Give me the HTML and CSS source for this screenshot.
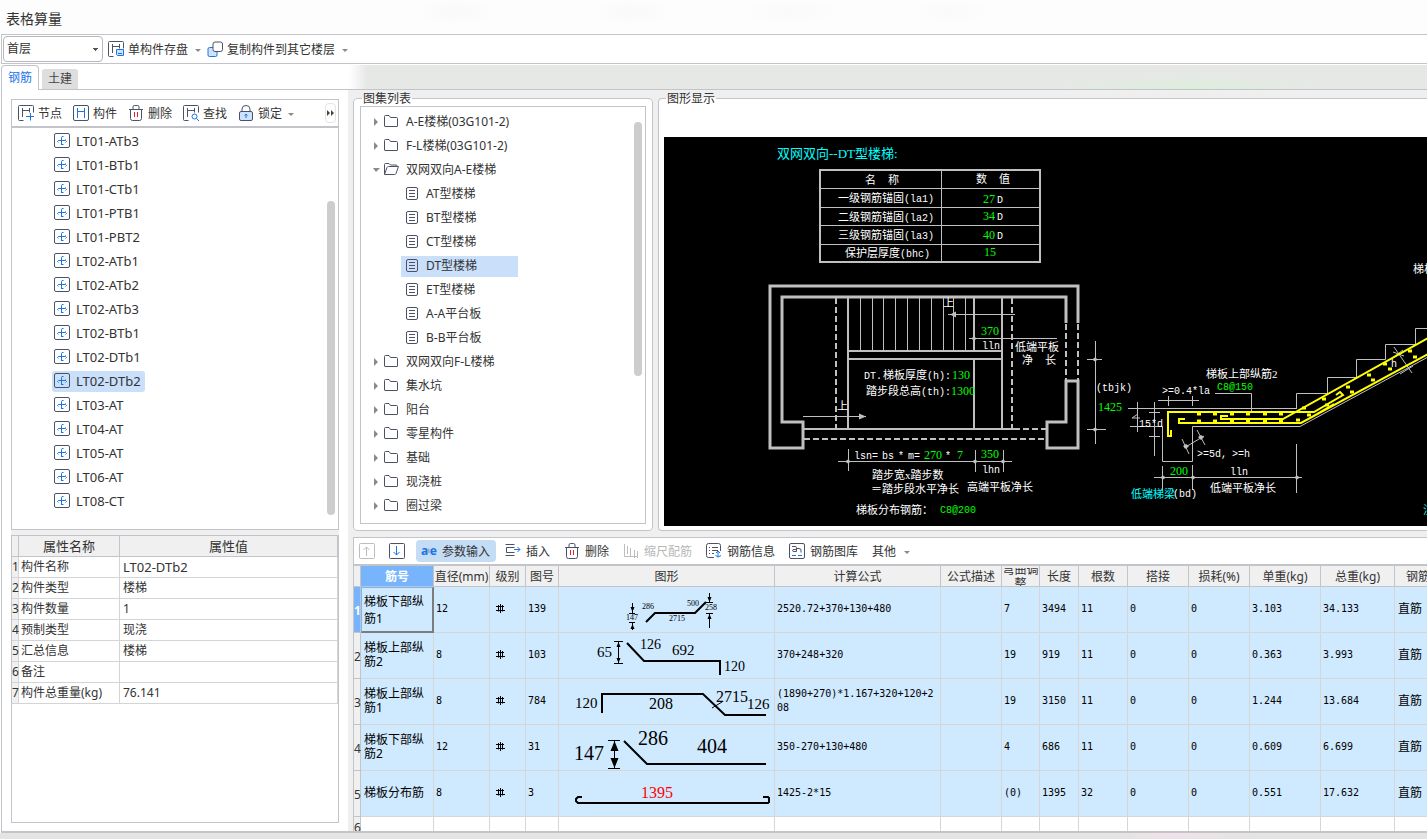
FILE: index.html
```html
<!DOCTYPE html>
<html lang="zh-CN">
<head>
<meta charset="utf-8">
<title>表格算量</title>
<link rel="stylesheet" href="styles.css">
</head>
<body>
<svg class="defs" width="0" height="0" aria-hidden="true">
  <symbol id="i-frame" viewBox="0 0 16 16"><path d="M5.500 15.500h-4a1 1 0 0 1-1-1v-13a1 1 0 0 1 1-1h13a1 1 0 0 1 1 1v6M4.500 3v9M4.500 5.500h7M11.500 3v4.500" class="ln"/></symbol>
  <symbol id="i-save" viewBox="0 0 16 16"><use href="#i-frame"/><path d="M8.500 8.500h7v6h-6l-1-1z" class="bl fillb"/><path d="M10 12.500h4" class="bl"/></symbol>
  <symbol id="i-node" viewBox="0 0 16 16"><use href="#i-frame"/><path d="M8 11.500h8M12.500 8v7.500" class="bl"/></symbol>
  <symbol id="i-comp" viewBox="0 0 16 16"><rect x=".5" y=".5" width="15" height="15" rx="1.500" class="ln"/><path d="M4.500 3v10M11.500 3v10M4.500 6.500h7" class="bl"/></symbol>
  <symbol id="i-find" viewBox="0 0 16 16"><use href="#i-frame"/><circle cx="11.500" cy="11.500" r="2.500" class="bl"/><path d="M13.500 13.500l2.500 2.500" class="bl"/></symbol>
  <symbol id="i-del" viewBox="0 0 16 16"><path d="M1 4.500h14M5 4V2q0-1.500 1.500-1.500h3Q11 .5 11 2v2M2.500 5v8.500q0 2 2 2h7q2 0 2-2V5" class="ln"/><path d="M6.500 7v5M9.500 7v5" class="rd"/></symbol>
  <symbol id="i-lock" viewBox="0 0 16 16"><path d="M4 6V4q0-3.500 4-3.500T12 4v2" class="ln"/><rect x="1.500" y="6.500" width="13" height="9" rx="1.500" class="ln fillb"/><path d="M8 13v-4M6.500 10.500L8 9l1.500 1.500" class="bl"/></symbol>
  <symbol id="i-copy" viewBox="0 0 16 16"><rect x="1" y="6.500" width="9" height="9" rx="1.500" class="bl fillb"/><rect x="6" y="1" width="9.500" height="9.500" rx="2" class="ln fillw"/></symbol>
  <symbol id="i-rebar" viewBox="0 0 16 16"><rect x=".5" y=".5" width="15" height="14" rx="1.500" class="ln"/><path d="M4.500 9.500L3.500 8.500 4.500 7.500h7l1 1-1 1M11.500 7.500v-1M7.500 12V4.500q0-1.500 2-1M7.500 11.500h2" class="bl"/></symbol>
  <symbol id="i-folder" viewBox="0 0 16 16"><path d="M1.500 12V2.500q0-1 1-1h3.500l1.500 2h6q1 0 1 1V12q0 .5-.5.5H2q-.5 0-.5-.5z" class="ln"/></symbol>
  <symbol id="i-open" viewBox="0 0 16 16"><path d="M1.500 12V2.500q0-1 1-1h3.500l1.500 1.500h5.500q1 0 1 1V4.500M1.500 12.500l2.500-7q.5-1 1.500-1h10l-2.500 7q-.3 1-1.500 1z" class="ln"/></symbol>
  <symbol id="i-doc" viewBox="0 0 16 16"><rect x="2.500" y="1.500" width="11" height="12" rx="1.500" class="ln"/><path d="M5 4.500h6M5 7.500h6M5 10.500h6" class="ln"/></symbol>
  <symbol id="i-up" viewBox="0 0 16 16"><rect x=".5" y=".5" width="15" height="15" rx="1" class="gr"/><path d="M7.500 13V4M4.500 7l3-3 3 3" class="gr"/></symbol>
  <symbol id="i-down" viewBox="0 0 16 16"><rect x=".5" y=".5" width="15" height="15" rx="1" class="ln"/><path d="M7.500 3v9M4.500 9l3 3 3-3" class="bl"/></symbol>
  <symbol id="i-insert" viewBox="0 0 16 16"><path d="M.5 1.500h9M.5 12.500h9M9.500 4.500h-8v5h8" class="ln"/><path d="M9 6.500h6M12.500 4l2.500 2.500L12.500 9" class="bl"/></symbol>
  <symbol id="i-scale" viewBox="0 0 16 16"><path d="M1.500 1v12.500h13M4.500 3v8M7.500 5v8M11.500 7v8M14.500 8v7" class="gr"/></symbol>
  <symbol id="i-info" viewBox="0 0 16 16"><path d="M8 14.500H2.500q-2 0-2-2v-10q0-2 2-2h10q2 0 2 2V8M3 4.500h1M6 4.500h6M3 7.500h1M6 7.500h6M3 10.500h1M6 10.500h2" class="ln"/><path d="M12 8.500v5.500M9.500 12.500q2.500 3 5.500 0M10 10l2-2 2 2" class="bl"/></symbol>
  <symbol id="i-lib" viewBox="0 0 16 16"><rect x=".5" y=".5" width="15" height="15" rx="1.500" class="ln"/><path d="M3 3.500h3q1.500 0 1.500 1v4M7.500 6.500H5q-1.500 0-1.500 1t1.500 1h2.500M8 5.500h2q2 0 2 1.500v2.500" class="ln"/><path d="M3 12.500h4M9 12.500h4" class="bl"/></symbol>
  <symbol id="i-grade" viewBox="0 0 10 12"><path d="M5.500 2v9M3.500 3v6.500M7.500 3v6.500M1 4.500h8M1 8.500h9" class="blk"/></symbol>
</svg>

<header class="title"><h1>表格算量</h1></header>

<div class="bar top-bar">
  <select class="floor" aria-label="楼层"><option>首层</option></select>
  <button class="tb"><svg class="ic"><use href="#i-save"/></svg>单构件存盘<i class="caret"></i></button>
  <button class="tb"><svg class="ic"><use href="#i-copy"/></svg>复制构件到其它楼层<i class="caret"></i></button>
</div>

<nav class="tabs">
  <button class="tab on">钢筋</button><button class="tab">土建</button><span class="strip"></span>
</nav>

<main class="main">
  <aside class="side">
    <section class="box tree-box">
      <div class="bar side-bar">
        <button class="tb"><svg class="ic"><use href="#i-node"/></svg>节点</button>
        <button class="tb"><svg class="ic"><use href="#i-comp"/></svg>构件</button>
        <button class="tb"><svg class="ic"><use href="#i-del"/></svg>删除</button>
        <button class="tb"><svg class="ic"><use href="#i-find"/></svg>查找</button>
        <button class="tb"><svg class="ic"><use href="#i-lock"/></svg>锁定<i class="caret"></i></button>
        <button class="more" aria-label="更多"><i></i><i></i></button>
      </div>
      <ul class="tree comps">
        <li><span><svg class="ic"><use href="#i-rebar"/></svg>LT01-ATb3</span></li>
        <li><span><svg class="ic"><use href="#i-rebar"/></svg>LT01-BTb1</span></li>
        <li><span><svg class="ic"><use href="#i-rebar"/></svg>LT01-CTb1</span></li>
        <li><span><svg class="ic"><use href="#i-rebar"/></svg>LT01-PTB1</span></li>
        <li><span><svg class="ic"><use href="#i-rebar"/></svg>LT01-PBT2</span></li>
        <li><span><svg class="ic"><use href="#i-rebar"/></svg>LT02-ATb1</span></li>
        <li><span><svg class="ic"><use href="#i-rebar"/></svg>LT02-ATb2</span></li>
        <li><span><svg class="ic"><use href="#i-rebar"/></svg>LT02-ATb3</span></li>
        <li><span><svg class="ic"><use href="#i-rebar"/></svg>LT02-BTb1</span></li>
        <li><span><svg class="ic"><use href="#i-rebar"/></svg>LT02-DTb1</span></li>
        <li><span class="sel"><svg class="ic"><use href="#i-rebar"/></svg>LT02-DTb2</span></li>
        <li><span><svg class="ic"><use href="#i-rebar"/></svg>LT03-AT</span></li>
        <li><span><svg class="ic"><use href="#i-rebar"/></svg>LT04-AT</span></li>
        <li><span><svg class="ic"><use href="#i-rebar"/></svg>LT05-AT</span></li>
        <li><span><svg class="ic"><use href="#i-rebar"/></svg>LT06-AT</span></li>
        <li><span><svg class="ic"><use href="#i-rebar"/></svg>LT08-CT</span></li>
      </ul>
      <i class="thumb thumb-a"></i>
    </section>
    <section class="box props-box">
      <table class="props">
        <colgroup><col class="p0"><col class="p1"><col></colgroup>
        <thead><tr><th></th><th>属性名称</th><th>属性值</th></tr></thead>
        <tbody>
          <tr><th>1</th><td>构件名称</td><td class="latin">LT02-DTb2</td></tr>
          <tr><th>2</th><td>构件类型</td><td>楼梯</td></tr>
          <tr><th>3</th><td>构件数量</td><td>1</td></tr>
          <tr><th>4</th><td>预制类型</td><td>现浇</td></tr>
          <tr><th>5</th><td>汇总信息</td><td>楼梯</td></tr>
          <tr><th>6</th><td>备注</td><td></td></tr>
          <tr><th>7</th><td>构件总重量(kg)</td><td>76.141</td></tr>
        </tbody>
      </table>
    </section>
  </aside>

  <div class="work">
    <div class="upper">
      <fieldset class="group list-group">
        <legend>图集列表</legend>
        <div class="list">
          <ul class="tree atlas">
            <li><i class="tw"></i><svg class="ic"><use href="#i-folder"/></svg>A-E楼梯(03G101-2)</li>
            <li><i class="tw"></i><svg class="ic"><use href="#i-folder"/></svg>F-L楼梯(03G101-2)</li>
            <li><i class="tw down"></i><svg class="ic"><use href="#i-open"/></svg>双网双向A-E楼梯</li>
            <li class="leaf"><span><svg class="ic"><use href="#i-doc"/></svg>AT型楼梯</span></li>
            <li class="leaf"><span><svg class="ic"><use href="#i-doc"/></svg>BT型楼梯</span></li>
            <li class="leaf"><span><svg class="ic"><use href="#i-doc"/></svg>CT型楼梯</span></li>
            <li class="leaf"><span class="sel"><svg class="ic"><use href="#i-doc"/></svg>DT型楼梯</span></li>
            <li class="leaf"><span><svg class="ic"><use href="#i-doc"/></svg>ET型楼梯</span></li>
            <li class="leaf"><span><svg class="ic"><use href="#i-doc"/></svg>A-A平台板</span></li>
            <li class="leaf"><span><svg class="ic"><use href="#i-doc"/></svg>B-B平台板</span></li>
            <li><i class="tw"></i><svg class="ic"><use href="#i-folder"/></svg>双网双向F-L楼梯</li>
            <li><i class="tw"></i><svg class="ic"><use href="#i-folder"/></svg>集水坑</li>
            <li><i class="tw"></i><svg class="ic"><use href="#i-folder"/></svg>阳台</li>
            <li><i class="tw"></i><svg class="ic"><use href="#i-folder"/></svg>零星构件</li>
            <li><i class="tw"></i><svg class="ic"><use href="#i-folder"/></svg>基础</li>
            <li><i class="tw"></i><svg class="ic"><use href="#i-folder"/></svg>现浇桩</li>
            <li><i class="tw"></i><svg class="ic"><use href="#i-folder"/></svg>圈过梁</li>
            <li><i class="tw"></i><svg class="ic"><use href="#i-folder"/></svg></li>
          </ul>
          <i class="thumb thumb-b"></i>
        </div>
      </fieldset>

      <fieldset class="group view-group">
        <legend>图形显示</legend>
        <div class="canvas">
          <svg class="cad" width="764" height="390" viewBox="664 137 764 390">
            <g class="w2">
              <rect x="820" y="170" width="220" height="92"/>
              <path d="M848 297V428M848 351H1002M848 359H1002M974 297V351M974 359V428M1002 297V428M803 429H1014"/>
              <path class="dash" d="M836 298V428M1012 298V428M1014 429H1046M804 439H1046M1066 324V380M1078 324V380"/>
            </g>
            <path class="w3" d="M1078 323V286H770V448H803V422H782V297H1066V323M1066 381H1078V448H1047V422H1066Z"/>
            <path class="w1" d="M821 188.500H1040M821 207.500H1040M821 225.500H1040M821 244.500H1040M941.500 170V262
              M860.500 298V350M872.500 298V350M883.500 298V350M895.500 298V350M907.500 298V350M919.500 298V350M931.500 298V350M943.500 298V350M953.500 298V350M965.500 298V350
              M948 314.500H1015M969 338.500H1057M803 416.500H866M838 461.500H1012M848.500 449V471M975.500 450V472M1003.500 450V472
              M1095.500 341V444M1087 359.500H1102M1087 429.500H1106
              M1128 408.500H1297M1137.500 402V432M1130 426.500H1162.500V461.500H1192.500V426.500H1300L1428 357M1154.500 402V456M1149 412.500H1160M1149 436.500H1160M1138 414L1132 418H1140
              M1158 400.500H1199M1168.500 396V406M1192.500 396V406M1215 393.500H1251.500V411
              M1296.500 408V393.500H1327.500V377.500H1356.500V359.500H1385.500V344.500H1415.500V328.500H1428
              M1184 448L1204 436M1182 439L1189 454M1197 430L1205 445
              M1154 477.500H1302M1162.500 466V490M1192.500 465V490M1296.500 444V493
              M1394 347L1412 373M1391 359L1403 350M1400 374L1413 366M1393 352L1404 356"/>
            <path class="dots" d="M950 314.500l6-3v6zM866 416.500l-7-3v6zM845 461.500l3-2 3 2-3 2zM972 461.500l3-2 3 2-3 2zM1000 461.500l3-2 3 2-3 2zM971 338.500l3-2 3 2-3 2zM1092 359.500l3-2 3 2-3 2zM1092 429.500l3-2 3 2-3 2zM1160 477.500l3-2 3 2-3 2zM1190 477.500l3-2 3 2-3 2zM1294 477.500l3-2 3 2-3 2zM1183 446l3-2 3 2-3 3zM1198 437l3-2 3 2-3 3z"/>
            <path class="y2" d="M1171 430V436H1168V412H1314L1343 395L1340 392L1336 395M1185 419H1179V423H1301L1428 354M1228 416H1221V419H1283L1428 338M1310 418L1334 404"/>
            <path class="ydot" d="M1197 414h4M1213 414h4M1230 414h4M1246 414h4M1263 414h4M1279 414h4M1197 421h4M1213 421h4M1230 421h4M1246 421h4M1263 421h4M1279 421h4M1296 420h4M1302 408h4M1307 415h4M1322 399h4M1325 405h4M1346 387h4M1350 392h4M1367 375h4M1371 380h4M1383 364h4M1388 369h4M1408 351h4M1413 357h4"/>
            <g class="tx">
              <text x="777" y="158" class="c t13">双网双向--DT型楼梯:</text>
              <text x="865" y="184">名</text><text x="888" y="184">称</text><text x="976" y="183">数</text><text x="999" y="183">值</text>
              <text x="838" y="202">一级钢筋锚固<tspan class="m">(la1)</tspan></text><text x="838" y="221">二级钢筋锚固<tspan class="m">(la2)</tspan></text><text x="838" y="239">三级钢筋锚固<tspan class="m">(la3)</tspan></text><text x="845" y="257">保护层厚度<tspan class="m">(bhc)</tspan></text>
              <text x="983" y="203" class="g">27</text><text x="983" y="220" class="g">34</text><text x="983" y="239" class="g">40</text><text x="984" y="256" class="g">15</text>
              <text x="997" y="203" class="m">D</text><text x="997" y="220" class="m">D</text><text x="997" y="239" class="m">D</text>
              <text x="943" y="307">上</text><text x="837" y="410">上</text>
              <text x="981" y="335" class="g">370</text><text x="982" y="349" class="m">lln</text>
              <text x="1015" y="351">低端平板</text><text x="1022" y="364">净</text><text x="1045" y="364">长</text>
              <text x="864" y="379" class="m">DT.</text><text x="883" y="379">梯板厚度<tspan class="m">(h):</tspan></text><text x="952" y="379" class="g">130</text>
              <text x="866" y="395">踏步段总高<tspan class="m">(th):</tspan></text><text x="951" y="395" class="g">1300</text>
              <text x="854" y="459" class="m">lsn=</text><text x="882" y="459" class="m">bs</text><text x="898" y="459" class="m">*</text><text x="908" y="459" class="m">m=</text><text x="924" y="459" class="g">270</text><text x="945" y="459" class="m">*</text><text x="957" y="459" class="g">7</text>
              <text x="981" y="458" class="g">350</text><text x="982" y="473" class="m">lhn</text>
              <text x="872" y="479">踏步宽x踏步数</text><text x="871" y="493">＝踏步段水平净长</text><text x="967" y="491">高端平板净长</text>
              <text x="856" y="514">梯板分布钢筋：</text><text x="940" y="513" class="g m">C8@200</text>
              <text x="1096" y="391" class="m">(tbjk)</text><text x="1098" y="411" class="g">1425</text>
              <text x="1162" y="394" class="m">&gt;=0.4*la</text><text x="1139" y="427" class="m">15*d</text>
              <text x="1206" y="378">梯板上部纵筋2</text><text x="1217" y="390" class="g m">C8@150</text>
              <text x="1197" y="457" class="m">&gt;=5d,</text><text x="1232" y="457" class="m">&gt;=h</text>
              <text x="1170" y="475" class="g">200</text><text x="1230" y="475" class="m">lln</text>
              <text x="1131" y="498" class="c">低端梯梁</text><text x="1173" y="497" class="m">(bd)</text><text x="1210" y="492">低端平板净长</text>
              <text x="1391" y="367" class="m">h</text><text x="1413" y="273">梯板</text><text x="1423" y="514" class="c">注</text>
            </g>
          </svg>
        </div>
      </fieldset>
    </div>

    <section class="lower">
      <div class="bar grid-bar">
        <button class="tb" aria-label="上移" disabled><svg class="ic"><use href="#i-up"/></svg></button>
        <button class="tb" aria-label="下移"><svg class="ic"><use href="#i-down"/></svg></button>
        <button class="tb active"><span class="aie"><b>a</b><svg width="5" height="12" viewBox="0 0 5 12"><path d="M.5.5q2 0 2 1.500v8q0 1.500-2 1.500M4.500.5q-2 0-2 1.500v8q0 1.500 2 1.500" class="ln"/></svg><b>e</b></span>参数输入</button>
        <button class="tb"><svg class="ic"><use href="#i-insert"/></svg>插入</button>
        <button class="tb"><svg class="ic"><use href="#i-del"/></svg>删除</button>
        <button class="tb" disabled><svg class="ic"><use href="#i-scale"/></svg>缩尺配筋</button>
        <button class="tb"><svg class="ic"><use href="#i-info"/></svg>钢筋信息</button>
        <button class="tb"><svg class="ic"><use href="#i-lib"/></svg>钢筋图库</button>
        <button class="tb">其他<i class="caret"></i></button>
      </div>
      <div class="grid-wrap">
        <table class="grid">
          <colgroup><col class="k0"><col class="k1"><col class="k2"><col class="k3"><col class="k4"><col class="k5"><col class="k6"><col class="k7"><col class="k8"><col class="k9"><col class="k10"><col class="k11"><col class="k11"><col class="k13"><col class="k14"><col class="k15"></colgroup>
          <thead><tr><th></th><th class="hot">筋号</th><th>直径(mm)</th><th>级别</th><th>图号</th><th>图形</th><th>计算公式</th><th>公式描述</th><th><div class="two">弯曲调整</div></th><th>长度</th><th>根数</th><th>搭接</th><th>损耗(%)</th><th>单重(kg)</th><th>总重(kg)</th><th class="last">钢筋归类</th></tr></thead>
          <tbody>
            <tr><th class="hot">1</th><td class="cur">梯板下部纵筋1</td><td>12</td><td class="gd"><svg width="10" height="12"><use href="#i-grade"/></svg></td><td>139</td>
              <td class="fig"><svg viewBox="559 587 215 45" width="215" height="45"><path class="bar-l" d="M646 622L655 613H695L706 602"/><path class="thin" d="M632.500 603V613M629 613.500H635M629 622.500H635M632.500 622V630M709.500 593V602M706 602.500H713M706 613.500H713M709.500 614V628"/><path class="arr" d="M632.500 612l-2-5h4zM632.500 624l-2 5h4zM709.500 602l-2-5h4zM709.500 614l-2 5h4z"/><text x="626" y="620" class="s8">147</text><text x="642" y="609" class="s8">286</text><text x="687" y="606" class="s8">500</text><text x="669" y="621" class="s8">2715</text><text x="705" y="610" class="s8">258</text></svg></td>
              <td>2520.72+370+130+480</td><td></td><td>7</td><td>3494</td><td>11</td><td>0</td><td>0</td><td>3.103</td><td>34.133</td><td>直筋</td></tr>
            <tr><th>2</th><td>梯板上部纵筋2</td><td>8</td><td class="gd"><svg width="10" height="12"><use href="#i-grade"/></svg></td><td>103</td>
              <td class="fig"><svg viewBox="559 633 215 45" width="215" height="45"><path class="bar-l" d="M627 643L644 661H720V675"/><path class="thin" d="M618.500 641V663M614 641.500H623M614 663.500H623"/><path class="arr" d="M618.500 642l-2 5h4zM618.500 663l-2-5h4z"/><text x="597" y="657" class="s15">65</text><text x="640" y="649" class="s14">126</text><text x="672" y="655" class="s15">692</text><text x="724" y="671" class="s14">120</text></svg></td>
              <td>370+248+320</td><td></td><td>19</td><td>919</td><td>11</td><td>0</td><td>0</td><td>0.363</td><td>3.993</td><td>直筋</td></tr>
            <tr><th>3</th><td>梯板上部纵筋1</td><td>8</td><td class="gd"><svg width="10" height="12"><use href="#i-grade"/></svg></td><td>784</td>
              <td class="fig"><svg viewBox="559 679 215 45" width="215" height="45"><path class="bar-l" d="M602 713V694H703L725 715H766"/><path class="thin" d="M712 708L722 702"/><text x="575" y="708" class="s15">120</text><text x="649" y="709" class="s16">208</text><text x="716" y="702" class="s16">2715</text><text x="747" y="709" class="s15">126</text></svg></td>
              <td>(1890+270)*1.167+320+120+2<wbr>08</td><td></td><td>19</td><td>3150</td><td>11</td><td>0</td><td>0</td><td>1.244</td><td>13.684</td><td>直筋</td></tr>
            <tr><th>4</th><td>梯板下部纵筋2</td><td>12</td><td class="gd"><svg width="10" height="12"><use href="#i-grade"/></svg></td><td>31</td>
              <td class="fig"><svg viewBox="559 725 215 45" width="215" height="45"><path class="bar-l" d="M624 741L647 764H766"/><path class="thin" d="M614.500 741V769M608 740.500H620M608 768.500H620"/><path class="arr" d="M614.500 741l-4 10h8zM614.500 768l-4-10h8z"/><text x="574" y="760" class="s20">147</text><text x="638" y="745" class="s20">286</text><text x="697" y="753" class="s20">404</text></svg></td>
              <td>350-270+130+480</td><td></td><td>4</td><td>686</td><td>11</td><td>0</td><td>0</td><td>0.609</td><td>6.699</td><td>直筋</td></tr>
            <tr><th>5</th><td>梯板分布筋</td><td>8</td><td class="gd"><svg width="10" height="12"><use href="#i-grade"/></svg></td><td>3</td>
              <td class="fig"><svg viewBox="559 771 215 45" width="215" height="45"><path class="bar-l" d="M582 797H578L576 799V801L578 803H768L769 802V798L768 797H763"/><text x="641" y="798" class="s16 red">1395</text></svg></td>
              <td>1425-2*15</td><td></td><td>(0)</td><td>1395</td><td>32</td><td>0</td><td>0</td><td>0.551</td><td>17.632</td><td>直筋</td></tr>
            <tr class="blank"><th>6</th><td></td><td></td><td></td><td></td><td></td><td></td><td></td><td></td><td></td><td></td><td></td><td></td><td></td><td></td><td></td></tr>
          </tbody>
        </table>
      </div>
    </section>
  </div>
</main>
<footer class="foot"></footer>
</body>
</html>
```
FILE: styles.css
```css
* { box-sizing: border-box; }
body {
  margin: 0;
  height: 100vh;
  display: flex;
  flex-direction: column;
  overflow: hidden;
  background: #fff;
  color: #333;
  font: 12px/16px "Noto Sans", "Noto Sans CJK SC", sans-serif;
}
button, select { font: inherit; color: inherit; }
button { border: 0; background: none; padding: 0; }
ul { list-style: none; margin: 0; padding: 0; }
.defs { position: absolute; }

.ic { width: 16px; height: 16px; flex: none; }
.ln, .bl, .rd, .gr, .blk { fill: none; stroke: #4c5266; stroke-width: 1; }
.bl { stroke: #1a73e8; }
.rd { stroke: #e0202a; }
.gr { stroke: #bdbdbd; }
.blk { stroke: #000; }
.fillb { fill: #cfe2fb; }
.fillw { fill: #fff; }

.title {
  height: 34px;
  flex: none;
  padding: 9px 6px 0;
  background:
    radial-gradient(ellipse 45px 14px at 455px 12px, #f9f9f9, transparent),
    radial-gradient(ellipse 45px 14px at 630px 12px, #f9f9f9, transparent),
    radial-gradient(ellipse 60px 14px at 790px 12px, #fafafa, transparent),
    radial-gradient(ellipse 50px 14px at 950px 12px, #fafafa, transparent),
    #fdfdfd;
}
.title h1 { margin: 0; font-size: 14px; font-weight: 400; line-height: 20px; }

.bar { display: flex; align-items: center; flex: none; }
.tb { display: flex; align-items: center; gap: 4px; height: 18px; padding-top: 2px; white-space: nowrap; }
.tb .ic { margin-top: -2px; }
.caret { margin-left: 3px; border: 3px solid transparent; border-top-color: #8a8a8a; border-bottom: 0; }
.top-bar { height: 30px; gap: 5px; padding: 0 1px; border: 1px solid #c3c4c9; border-right: 0; margin-left: 1px; }
.top-bar .tb { margin-right: 1px; }
.floor {
  width: 100px;
  height: 26px;
  padding: 0 3px;
  appearance: none;
  border: 1px solid #b5b7bd;
  border-radius: 4px;
  background: linear-gradient(#555, #555) 89px 11px / 5px 1px no-repeat, linear-gradient(#555, #555) 90px 12px / 3px 1px no-repeat, linear-gradient(#555, #555) 91px 13px / 1px 1px no-repeat, #fff;
}

.tabs { display: flex; align-items: flex-end; height: 26px; flex: none; padding-left: 1px; background: linear-gradient(#c3c4c9, #c3c4c9) 38px bottom / 100% 1px no-repeat; }
.tab { width: 36px; height: 20px; margin: 0 0 1px 3px; background: #dedede; border-radius: 3px 3px 0 0; color: #444; line-height: 20px; }
.tab.on { width: 38px; height: 25px; margin: 0; background: #fff; border: 1px solid #c3c4c9; border-bottom: 0; border-radius: 4px 4px 0 0; color: #1a73e8; line-height: 24px; }
.strip { flex: 1; align-self: stretch; margin: 1px 0 1px 271px; background: radial-gradient(ellipse 130px 14px at 840px 24px, #dceedb, transparent), linear-gradient(90deg, #fff, #e6e8e6 18px); }

.main { flex: 1; min-height: 0; display: flex; border-left: 1px solid #c3c4c9; margin-left: 1px; border-bottom: 2px solid #c3c4c9; }
.side { width: 346px; flex: none; padding: 9px 9px 8px; display: grid; grid-template-rows: 3fr 2fr; gap: 5px; min-height: 0; background: linear-gradient(#efefef, #efefef) 9px 59% / 328px 24px no-repeat; }
.box { position: relative; background: #fff; border: 1px solid #c3c4c9; overflow: hidden; min-height: 0; }
.side-bar { height: 28px; gap: 11px; padding: 0 2px 0 6px; border-bottom: 2px solid #c3c4c9; }
.side-bar .tb { gap: 4px; }
.side-bar .caret { margin-left: 2px; }
.more { display: flex; align-items: center; justify-content: center; gap: 1px; width: 11px; height: 20px; margin-left: auto; border: 1px solid #e4e4e4; border-radius: 4px; }
.more i { border: 3px solid transparent; border-left-color: #444; border-right: 0; }
.tree li { display: flex; align-items: center; height: 24px; white-space: nowrap; }
.comps { font-size: 13px; padding-top: 1px; }
.comps li { padding-left: 40px; }
.comps span { display: flex; align-items: center; gap: 6px; height: 21px; padding: 0 4px 0 2px; margin-left: 0; border-radius: 3px; }
.comps .ic { margin-top: -1px; }
.sel { background: #c9dffa; }
.thumb { position: absolute; width: 8px; border-radius: 4px; background: #cdcdcd; }
.thumb-a { right: 3px; top: 101px; height: 314px; }
.thumb-b { right: 3px; top: 15px; height: 254px; }

.props { width: 100%; border-collapse: separate; border-spacing: 0; table-layout: fixed; }
.p0 { width: 7px; }
.p1 { width: 101px; }
.props tr { height: 21px; }
.props th, .props td { height: 21px; padding: 0 2px; border-right: 1px solid #d4d4d4; border-bottom: 1px solid #d4d4d4; font-weight: 400; text-align: left; white-space: nowrap; line-height: 18px; }
.props td:last-child { padding-left: 3px; }
.props tr > :first-child { padding: 0; background: #f0f0f0; }
.props thead th { background: #f0f0f0; text-align: center; font-size: 13px; border-color: #c3c4c9; }
.props .latin { font-size: 13px; }

.work { flex: 1; min-width: 0; display: grid; grid-template-rows: 3fr 2fr; gap: 6px; padding-left: 5px; background: #efefef; }
.upper { display: flex; gap: 5px; min-height: 0; min-width: 0; }
.group { display: flex; flex-direction: column; min-width: 0; min-height: 0; margin: 0; padding: 0 6px 6px; border: 1px solid #c3c4c9; border-radius: 4px; background: #fff; }
.group legend { padding: 0 1px; margin-left: 2px; line-height: 17px; }
.list-group { width: 300px; flex: none; }
.view-group { flex: 1; border-right: 0; border-radius: 4px 0 0 4px; padding: 0 0 4px 5px; }
.list-group legend { margin-bottom: -1px; }
.list { position: relative; height: 100%; min-height: 0; border: 1px solid #c3c4c9; overflow: hidden; padding-top: 3px; }
.atlas li { padding-left: 12px; }
.atlas li > .ic { margin-right: 7px; }
.tw { width: 10px; height: 8px; background: #8a8a8a; clip-path: polygon(1px 0, 5px 4px, 1px 8px); }
.tw.down { clip-path: polygon(0 2px, 7px 2px, 3px 6px); }
.atlas .leaf { padding-left: 40px; }
.leaf span { display: flex; align-items: center; gap: 6px; height: 21px; width: 117px; padding-left: 3px; }
.canvas { height: calc(100% - 30px); margin-top: 30px; background: #000; overflow: hidden; }
.cad { display: block; }
.cad path, .cad rect { fill: none; stroke: #c0c0c0; }
.cad .w1 { stroke-width: 1; }
.cad .w2 { stroke-width: 2; }
.cad .w3 { stroke-width: 3; }
.cad .dash { stroke-dasharray: 6 3; }
.cad .dots { fill: #c0c0c0; stroke: none; }
.cad .y2 { stroke: #ff0; stroke-width: 2; }
.cad .ydot { stroke: #ff0; stroke-width: 3; }
.tx { font: 11px "Liberation Serif", "Noto Sans CJK SC", serif; fill: #fff; }
.tx .g { fill: #0f0; font-size: 12px; }
.tx .c { fill: #0ff; }
.tx .t13 { font-size: 13px; }
.tx .m { font-family: "Liberation Mono", monospace; font-size: 10px; }

.lower { display: flex; flex-direction: column; min-width: 0; min-height: 0; border: 1px solid #c3c4c9; border-right: 0; border-bottom: 0; background: #fff; overflow: hidden; }
.grid-bar { height: 28px; gap: 14px; padding: 0 5px; border-bottom: 2px solid #c3c4c9; }
.grid-bar .tb { gap: 5px; }
.tb:disabled { color: #b8b8b8; }
.grid-bar .active { background: #c5dcf5; border-radius: 4px; height: 22px; padding: 2px 6px 0 5px; margin: 0 -5px 0 -3px; }
.aie { display: flex; align-items: center; width: 16px; height: 16px; margin-top: -2px; color: #1a73e8; line-height: 14px; }
.grid-wrap { flex: 1; min-height: 0; overflow: hidden; }
.grid { width: 1174px; border-collapse: separate; border-spacing: 0; table-layout: fixed; }
.k0 { width: 7px; } .k1 { width: 73px; } .k2 { width: 56px; } .k3 { width: 36px; } .k4 { width: 33px; } .k5 { width: 216px; }
.k6 { width: 166px; } .k7 { width: 61px; } .k8 { width: 38px; } .k9 { width: 39px; } .k10 { width: 49px; } .k11 { width: 61px; }
.k13 { width: 71px; } .k14 { width: 74px; } .k15 { width: 133px; }
.grid thead tr { height: 21px; }
.grid th { padding: 2px 0 0; font-weight: 400; background: #f0f0f0; border-right: 1px solid #c3c4c9; border-bottom: 1px solid #c3c4c9; white-space: nowrap; }
.grid thead th { height: 21px; }
.grid thead .last { text-align: left; padding-left: 11px; }
.grid .hot { background: #77b4fb; color: #fff; font-weight: 700; }
.two { display: flex; align-items: center; height: 18px; overflow: hidden; white-space: normal; line-height: 14px; }
.grid tbody tr { height: 46px; }
.grid td { padding: 0 2px 2px; background: #cfe9ff; border-right: 1px solid #d6d6d6; border-bottom: 1px solid #d6d6d6; color: #000; line-height: 14px; font-family: "DejaVu Sans Mono", "Noto Sans CJK SC", monospace; font-size: 10px; }
.grid td:nth-child(2), .grid td:last-child { padding-left: 3px; font-family: "Noto Sans", "Noto Sans CJK SC", sans-serif; font-size: 12px; }
.grid td.cur { line-height: 17px; border: 2px solid #7c7c7c; border-top: 1px solid #77b4fb; border-left: 1px solid #77b4fb; padding: 0 2px; }
.grid .gd { padding: 0 0 0 5px; line-height: 12px; vertical-align: middle; }
.grid td.fig { padding: 0; line-height: 0; }
.grid .blank { height: 21px; }
.grid .blank td { background: #fff; }
.fig text { font-family: "Liberation Serif", serif; fill: #000; }
.fig .s8 { font-size: 8px; }
.fig .s14 { font-size: 14px; }
.fig .s15 { font-size: 15px; }
.fig .s16 { font-size: 16px; }
.fig .s20 { font-size: 20px; }
.fig .red { fill: #f00; }
.bar-l { fill: none; stroke: #000; stroke-width: 2; }
.thin { fill: none; stroke: #000; }
.arr { fill: #000; }

.foot { height: 6px; flex: none; background: linear-gradient(90deg, #e4e4e4 78%, #efe2e8 82%, #e4e4e4 88%); }
```
